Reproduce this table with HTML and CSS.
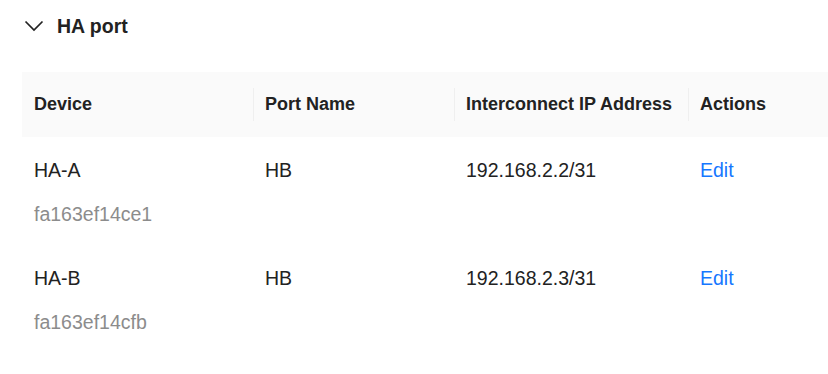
FILE: index.html
```html
<!DOCTYPE html>
<html>
<head>
    <title>HA port</title>
    <link rel="stylesheet" href="styles.css">
</head>
<body>
    <div class="panel">
        <div class="panel-title">
            <svg class="chevron" width="20" height="12" viewBox="0 0 20 12">
                <polyline points="1.5,1.5 10,10 18.5,1.5" fill="none" stroke="#222" stroke-width="1.7"/>
            </svg>
            <span>HA port</span>
        </div>

        <table class="port-table">
            <colgroup>
                <col style="width: 231px">
                <col style="width: 201px">
                <col style="width: 234px">
                <col style="width: 174px">
            </colgroup>
            <tr>
                <th>Device</th>
                <th class="sep">Port Name</th>
                <th class="sep">Interconnect IP Address</th>
                <th class="sep">Actions</th>
            </tr>
            <tr>
                <td>
                    <div>HA-A</div>
                    <div class="sub">fa163ef14ce1</div>
                </td>
                <td>HB</td>
                <td>192.168.2.2/31</td>
                <td><a class="link" href="#">Edit</a></td>
            </tr>
            <tr>
                <td>
                    <div>HA-B</div>
                    <div class="sub">fa163ef14cfb</div>
                </td>
                <td>HB</td>
                <td>192.168.2.3/31</td>
                <td><a class="link" href="#">Edit</a></td>
            </tr>
        </table>
    </div>
</body>
</html>
```

FILE: styles.css
```css
body {
    margin: 0;
    background-color: #fff;
    font-family: "Liberation Sans", Arial, sans-serif;
    color: #222;
    overflow: hidden;
}
.panel {
    padding-left: 22px;
}
.panel-title {
    display: flex;
    align-items: center;
    gap: 13px;
    height: 52px;
    margin-bottom: 20px;
    padding-left: 2px;
    font-size: 19.5px;
    font-weight: bold;
}
.chevron {
    display: block;
}
.port-table {
    width: 840px;
    table-layout: fixed;
    border-collapse: collapse;
}
.port-table th {
    position: relative;
    height: 65px;
    padding: 0 12px;
    background-color: #fafafa;
    font-size: 18px;
    font-weight: bold;
    text-align: left;
    white-space: nowrap;
}
.port-table th.sep::before {
    content: "";
    position: absolute;
    left: 0;
    top: 16px;
    width: 1px;
    height: 33px;
    background-color: #efefef;
}
.port-table td {
    vertical-align: top;
    padding: 21px 12px 19px;
    font-size: 19.5px;
    line-height: 24px;
}
.sub {
    margin-top: 20px;
    color: #8c8c8c;
}
.link {
    color: #1677ff;
    text-decoration: none;
}
```
